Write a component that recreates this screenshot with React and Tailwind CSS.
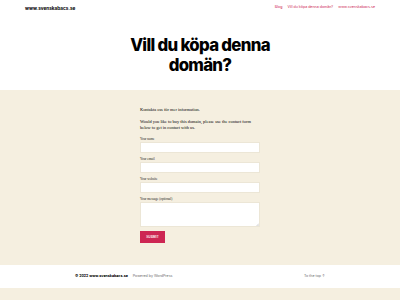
export default function App() {
  return (
    <div className="w-[400px] h-[300px] overflow-hidden bg-[#f5efe0] font-['Inter',sans-serif] text-black">
      <header className="bg-white h-[90px]">
        <div className="flex items-center justify-between pl-[25px] pr-[25px] pt-[5px] h-[11px]">
          <a className="text-[4.7px] font-bold leading-none">www.svenskabacs.se</a>
          <nav className="flex gap-[5px] text-[3.6px] leading-none text-[#cd2653]">
            <a>Blog</a>
            <a>Vill du köpa denna domän?</a>
            <a>www.svenskabacs.se</a>
          </nav>
        </div>
        <h1 className="mt-[23.5px] text-center text-[16.8px] leading-[20px] font-extrabold tracking-[-0.0415em]">
          Vill du köpa denna
          <br />
          domän?
        </h1>
      </header>

      <main className="w-[120px] mx-auto pt-[17px] font-['Liberation_Serif',serif] text-[4.4px] leading-[6px]">
        <p>Kontakta oss för mer information.</p>
        <p className="mt-[5.5px]">
          Would you like to buy this domain, please use the contact form below to get in contact with us.
        </p>

        <form className="mt-[6px] flex flex-col">
          <Field label="Your name" />
          <Field label="Your email" />
          <Field label="Your website" />
          <label className="block text-[3.3px] leading-[5px] text-[#1a1a1a]">Your message (optional)</label>
          <div className="relative mt-[0.5px]">
            <textarea className="block w-[120px] h-[24.5px] bg-white border border-[#ece6d6] resize-none" />
            <svg className="absolute right-[1px] bottom-[1px] w-[3px] h-[3px]" viewBox="0 0 3 3">
              <path d="M3 0.5 L0.5 3 M3 1.7 L1.7 3" stroke="#8a8a8a" strokeWidth="0.35" />
            </svg>
          </div>
          <button
            type="button"
            className="mt-[4.5px] w-[25px] h-[12.3px] bg-[#cd2653] text-white font-['Inter',sans-serif] font-semibold text-[3.1px] tracking-[0.03em]"
          >
            SUBMIT
          </button>
        </form>
      </main>

      <footer className="mt-[22px] bg-white h-[23px]">
        <div className="w-[250px] mx-auto h-full flex items-center justify-between text-[3.6px] leading-none">
          <div className="flex gap-[5px]">
            <span className="font-bold">© 2022 www.svenskabacs.se</span>
            <span className="text-[#6d6d6d]">Powered by WordPress</span>
          </div>
          <span className="text-[#6d6d6d]">To the top ↑</span>
        </div>
      </footer>
    </div>
  );
}

function Field({ label }) {
  return (
    <div className="mb-[4px]">
      <label className="block text-[3.3px] leading-[5px] text-[#1a1a1a]">{label}</label>
      <input className="mt-[0.5px] block w-[120px] h-[10.5px] bg-white border border-[#ece6d6]" />
    </div>
  );
}
